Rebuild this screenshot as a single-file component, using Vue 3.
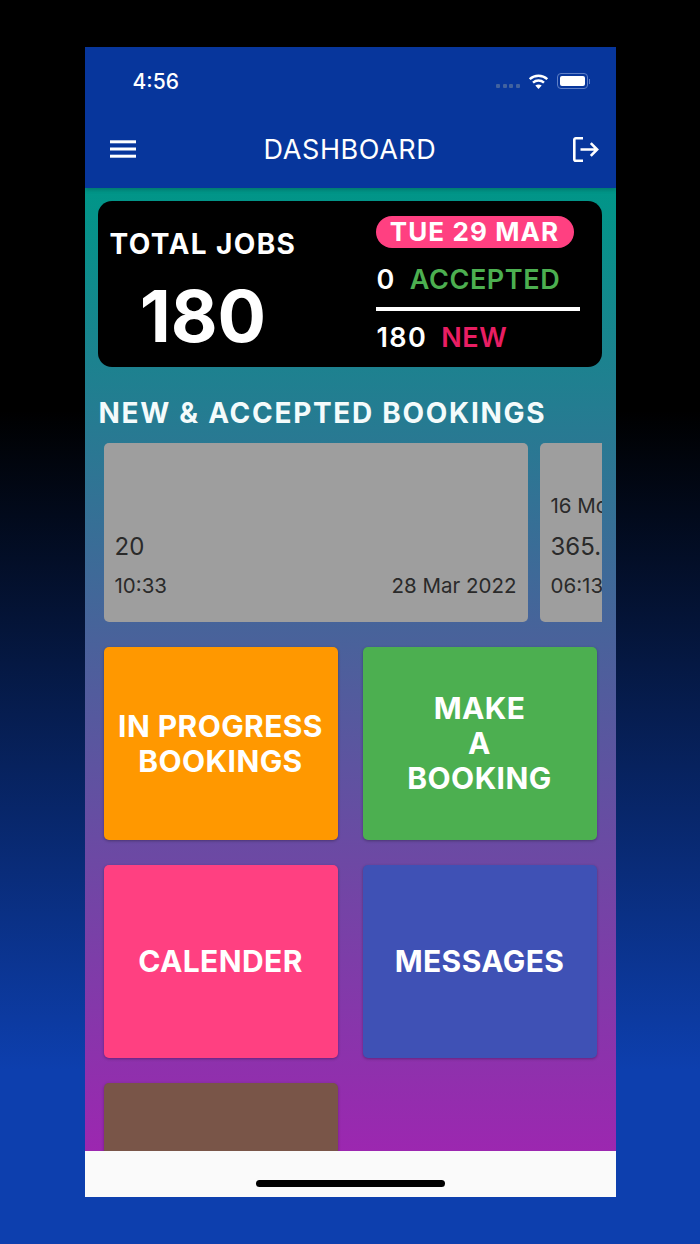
<script setup>
const tiles = [
  { label: ['IN PROGRESS', 'BOOKINGS'], color: '#ff9800' },
  { label: ['MAKE', 'A', 'BOOKING'], color: '#4caf50' },
  { label: ['CALENDER'], color: '#ff4081' },
  { label: ['MESSAGES'], color: '#3f51b5' },
  { label: [], color: '#795548' },
]
</script>

<template>
  <div class="page">
    <div class="phone">
      <header class="appbar">
        <div class="status">
          <span class="time">4:56</span>
          <div class="status-icons">
            <span class="dots"><i></i><i></i><i></i><i></i></span>
            <svg width="21" height="15" viewBox="0 0 20 15" fill="none" stroke="#fff" stroke-width="2.4">
              <path d="M1.2 5.2C6.2.6 13.8.6 18.8 5.2" />
              <path d="M4.5 8.6c3.2-2.9 7.8-2.9 11 0" />
              <path d="M10 15l-3.2-3.4c1.8-1.6 4.6-1.6 6.4 0z" fill="#fff" stroke="none" />
            </svg>
            <span class="battery"><b></b></span>
            <span class="nub"></span>
          </div>
        </div>
        <div class="toolbar">
          <svg class="menu" width="26" height="18" viewBox="0 0 26 18" fill="#fff">
            <rect y="0.3" width="26" height="3" />
            <rect y="7.500" width="26" height="3" />
            <rect y="14.700" width="26" height="3" />
          </svg>
          <h1>DASHBOARD</h1>
          <svg class="logout" width="26" height="25" viewBox="0 0 26 25" fill="none" stroke="#fff" stroke-width="2.600">
            <path d="M10 1.300H2.800a1.500 1.500 0 0 0-1.500 1.500v19.400a1.500 1.500 0 0 0 1.500 1.500H10" />
            <path d="M7.500 12.500H24M17.800 6.200l6.300 6.300-6.300 6.300" />
          </svg>
        </div>
      </header>

      <main class="content">
        <section class="summary">
          <div class="total">
            <div class="total-label">TOTAL JOBS</div>
            <div class="total-value">180</div>
          </div>
          <div class="today">
            <div class="pill">TUE 29 MAR</div>
            <div class="stat"><span class="num">0</span><span class="accepted">ACCEPTED</span></div>
            <div class="rule"></div>
            <div class="stat"><span class="num">180</span><span class="new">NEW</span></div>
          </div>
        </section>

        <h2>NEW &amp; ACCEPTED BOOKINGS</h2>

        <div class="carousel">
          <article class="booking">
            <div class="amount">20</div>
            <div class="meta"><span>10:33</span><span>28 Mar 2022</span></div>
          </article>
          <article class="booking">
            <div class="place">16 Mount Street</div>
            <div class="amount">365.</div>
            <div class="meta"><span>06:13</span></div>
          </article>
        </div>

        <div class="tiles">
          <div v-for="(tile, i) in tiles" :key="i" class="tile" :style="{ background: tile.color }">
            <span v-for="line in tile.label" :key="line">{{ line }}</span>
          </div>
        </div>
      </main>

      <footer class="homebar"><span></span></footer>
    </div>
  </div>
</template>

<style>
html, body {
  margin: 0;
  background: #000;
}
</style>

<style scoped>
.page {
  width: 700px;
  height: 1244px;
  box-sizing: border-box;
  padding-top: 47px;
  display: flex;
  justify-content: center;
  background: linear-gradient(to bottom, #000 0%, #000 33%, #0d3fae 86%, #0d3fae 100%);
  font-family: Inter, "Liberation Sans", sans-serif;
  overflow: hidden;
}

.phone {
  width: 531px;
  height: 1150px;
  display: flex;
  flex-direction: column;
}

.appbar {
  height: 141px;
  flex: none;
  position: relative;
  z-index: 1;
  background: #07369c;
  box-shadow: 0 2px 4px rgba(0, 0, 0, 0.2);
  color: #fff;
  display: flex;
  flex-direction: column;
}

.status {
  height: 68px;
  padding: 0 26px 0 48px;
  display: flex;
  align-items: center;
  justify-content: space-between;
}

.time {
  font-size: 21px;
  font-weight: 500;
}

.status-icons {
  display: flex;
  align-items: center;
}

.dots {
  display: flex;
  gap: 2.5px;
  margin: 10px 8px 0 0;
}

.dots i {
  width: 4px;
  height: 4px;
  border-radius: 1px;
  background: #41629f;
}

.battery {
  width: 31px;
  height: 16px;
  box-sizing: border-box;
  margin-left: 8px;
  padding: 2px;
  border: 1px solid #5f7fc6;
  border-radius: 4px;
}

.battery b {
  display: block;
  height: 100%;
  background: #fff;
  border-radius: 2px;
}

.nub {
  width: 1px;
  height: 5px;
  margin-left: 1px;
  background: #5f7fc6;
}

.toolbar {
  height: 68px;
  padding: 0 17px;
  display: grid;
  grid-template-columns: 1fr auto 1fr;
  align-items: center;
}

.menu {
  margin-left: 8px;
}

.logout {
  justify-self: end;
}

.toolbar h1 {
  margin: 0;
  font-size: 27px;
  font-weight: 400;
  letter-spacing: 0.6px;
}

.content {
  flex: 1;
  min-height: 0;
  overflow: hidden;
  padding: 13px 14px 0 13px;
  background: linear-gradient(to bottom, #009688, #9c27b0);
}

.summary {
  height: 166px;
  box-sizing: border-box;
  padding: 15px 22px 0 12px;
  display: flex;
  justify-content: space-between;
  background: #000;
  border-radius: 14px;
  color: #fff;
}

.total-label {
  margin-top: 11px;
  font-size: 28px;
  font-weight: 700;
  letter-spacing: 1.4px;
  line-height: 34px;
}

.total-value {
  margin-top: 12px;
  text-align: center;
  font-size: 72px;
  font-weight: 700;
  line-height: 86px;
}

.today {
  width: 204px;
}

.pill {
  width: 198px;
  height: 32px;
  background: #ff4081;
  border-radius: 16px;
  text-align: center;
  font-size: 26px;
  font-weight: 700;
  letter-spacing: 1.1px;
  line-height: 32px;
}

.stat {
  display: flex;
  gap: 14px;
  padding-left: 1px;
  font-size: 27px;
  font-weight: 600;
  letter-spacing: 0.6px;
  line-height: 34px;
}

.stat:nth-child(2) {
  margin-top: 15px;
}

.num {
  letter-spacing: 1.4px;
}

.accepted {
  color: #4caf50;
}

.new {
  color: #e91e63;
}

.rule {
  height: 4px;
  margin: 10px 0;
  background: #fff;
}

h2 {
  margin: 30px 0 0 1px;
  color: #f4fbfb;
  font-size: 28px;
  font-weight: 700;
  letter-spacing: 1.7px;
  line-height: 32px;
  white-space: nowrap;
}

.carousel {
  margin: 14px 0 0 6px;
  display: flex;
  gap: 12px;
  overflow: hidden;
}

.booking {
  flex: none;
  width: 424px;
  height: 179px;
  box-sizing: border-box;
  padding: 0 11px;
  display: flex;
  flex-direction: column;
  justify-content: flex-end;
  background: #9e9e9e;
  border-radius: 5px;
  color: #2a2a2a;
}

.place {
  margin-bottom: 13px;
  font-size: 20.5px;
  line-height: 26px;
  white-space: nowrap;
}

.amount {
  font-size: 24px;
  line-height: 30px;
  white-space: nowrap;
}

.meta {
  margin: 11px 0 23px;
  display: flex;
  justify-content: space-between;
  font-size: 20.5px;
  line-height: 26px;
  white-space: nowrap;
}

.tiles {
  margin: 25px 5px 0 6px;
  display: grid;
  grid-template-columns: 234px 234px;
  grid-auto-rows: 193px;
  justify-content: space-between;
  row-gap: 25px;
}

.tile {
  display: flex;
  flex-direction: column;
  align-items: center;
  justify-content: center;
  border-radius: 5px;
  box-shadow: 0 1px 3px rgba(0, 0, 0, 0.3);
  color: #fff;
  font-size: 30px;
  font-weight: 700;
  letter-spacing: 0.4px;
  line-height: 35px;
}

.homebar {
  height: 46px;
  flex: none;
  background: #fafafa;
  display: flex;
  justify-content: center;
}

.homebar span {
  width: 189px;
  height: 7px;
  margin-top: 29px;
  background: #000;
  border-radius: 4px;
}
</style>
